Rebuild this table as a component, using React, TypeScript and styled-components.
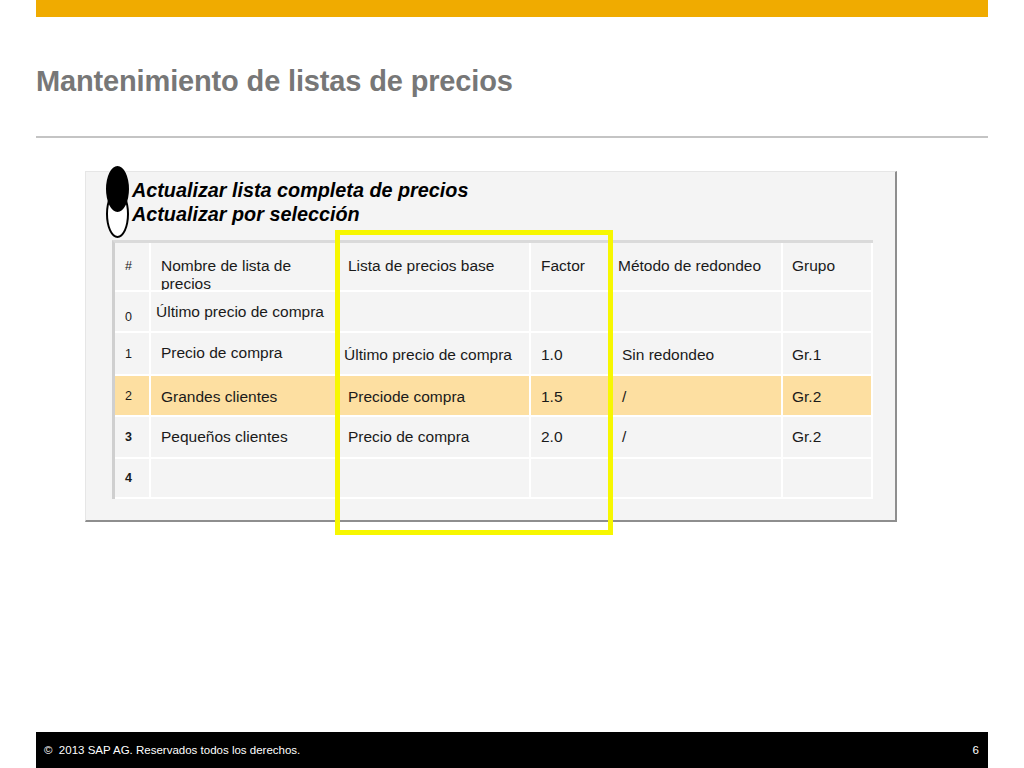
import React from "react";
import styled, { createGlobalStyle } from "styled-components";

const Global = createGlobalStyle`
  html, body { margin: 0; padding: 0; background: #fff; }
  body { font-family: "Liberation Sans", Arial, sans-serif; }
`;

const Page = styled.div`
  width: 1024px;
  height: 768px;
  box-sizing: border-box;
  padding: 0 36px;
  display: flex;
  flex-direction: column;
  overflow: hidden;
`;

const TopBar = styled.div`
  height: 17px;
  background: #f0ab00;
`;

const TitleArea = styled.div`
  height: 119px;
  box-sizing: border-box;
  padding-top: 46px;
`;

const Title = styled.h1`
  margin: 0;
  font-family: "Liberation Sans", Arial, sans-serif;
  font-weight: bold;
  font-size: 29px;
  line-height: 36px;
  color: #777777;
  letter-spacing: -0.15px;
`;

const Rule = styled.div`
  height: 2px;
  background: #c4c4c4;
`;

const Panel = styled.section`
  position: relative;
  margin: 33px 0 0 49px;
  width: 812px;
  height: 351px;
  box-sizing: border-box;
  background: #f4f4f4;
  border-top: 1px solid #e6e6e6;
  border-left: 1px solid #e6e6e6;
  border-right: 2px solid #8e8e8e;
  border-bottom: 2px solid #8e8e8e;
  padding: 6px 0 0 20px;
`;

const Options = styled.div`
  display: flex;
  flex-direction: column;
`;

const OptionRow = styled.div`
  display: flex;
  align-items: center;
  height: 24px;
`;

const OvalSlot = styled.div`
  position: relative;
  width: 26px;
  height: 24px;
  flex: none;
`;

const Oval = styled.span<{ $checked?: boolean; $h: number }>`
  position: absolute;
  left: 0;
  top: -12px;
  width: 23px;
  height: ${(p) => p.$h}px;
  box-sizing: border-box;
  border-radius: 50%;
  border: 2px solid #000;
  background: ${(p) => (p.$checked ? "#000" : "#fff")};
  z-index: ${(p) => (p.$checked ? 2 : 1)};
`;

const OptionLabel = styled.span`
  font-family: "Liberation Sans", Arial, sans-serif;
  font-weight: bold;
  font-style: italic;
  font-size: 19.8px;
  color: #000;
  white-space: nowrap;
`;

const Table = styled.div`
  margin: 14px 0 0 6px;
  display: inline-grid;
  grid-template-columns: 34px 186px 190px 78px 170px 88px;
  grid-template-rows: 47px 39px 41px 39px 40px 38px;
  gap: 2px;
  background: #ffffff;
  border-top: 3px solid #dadada;
  border-left: 3px solid #cfcfcf;
  padding: 0 2px 2px 0;
`;

const Cell = styled.div<{ $hl?: boolean; $pl: number; $top?: boolean; $dy?: number }>`
  background: ${(p) => (p.$hl ? "#fddfa1" : "#f4f4f4")};
  box-sizing: border-box;
  padding-left: ${(p) => p.$pl}px;
  padding-top: ${(p) => (p.$top ? 14 : 0)}px;
  display: flex;
  align-items: ${(p) => (p.$top ? "flex-start" : "center")};
  overflow: hidden;
  font-size: 15.5px;
  line-height: 18px;
  color: #1a1a1a;
  & > span {
    position: relative;
    top: ${(p) => p.$dy ?? 0}px;
  }
`;

const IndexText = styled.span<{ $bold?: boolean }>`
  font-size: 12.5px;
  font-weight: ${(p) => (p.$bold ? "bold" : "normal")};
`;

const Highlight = styled.div`
  position: absolute;
  left: 249px;
  top: 58px;
  width: 278px;
  height: 305px;
  box-sizing: border-box;
  border: 5px solid #f7f700;
  pointer-events: none;
`;

const Footer = styled.footer`
  margin-top: auto;
  height: 36px;
  background: #000;
  color: #fff;
  display: flex;
  align-items: center;
  justify-content: space-between;
  padding: 0 9px 0 8px;
  font-family: "Liberation Sans", Arial, sans-serif;
  font-size: 11.5px;
`;

type Row = {
  idx: string;
  bold?: boolean;
  hl?: boolean;
  idxDy?: number;
  cells: { text: string; pl: number; dy?: number }[];
};

const header = [
  { text: "Nombre de lista de precios", pl: 10 },
  { text: "Lista de precios base", pl: 9 },
  { text: "Factor", pl: 10 },
  { text: "Método de redondeo", pl: 7 },
  { text: "Grupo", pl: 9 },
];

const rows: Row[] = [
  {
    idx: "0",
    idxDy: 5,
    cells: [
      { text: "Último precio de compra", pl: 5 },
      { text: "", pl: 9 },
      { text: "", pl: 10 },
      { text: "", pl: 11 },
      { text: "", pl: 9 },
    ],
  },
  {
    idx: "1",
    cells: [
      { text: "Precio de compra", pl: 10, dy: -1 },
      { text: "Último precio de compra", pl: 5, dy: 1 },
      { text: "1.0", pl: 10, dy: 1 },
      { text: "Sin redondeo", pl: 11, dy: 1 },
      { text: "Gr.1", pl: 9, dy: 1 },
    ],
  },
  {
    idx: "2",
    hl: true,
    cells: [
      { text: "Grandes clientes", pl: 10, dy: 1 },
      { text: "Preciode compra", pl: 9, dy: 1 },
      { text: "1.5", pl: 10, dy: 1 },
      { text: "/", pl: 11, dy: 1 },
      { text: "Gr.2", pl: 9, dy: 1 },
    ],
  },
  {
    idx: "3",
    bold: true,
    cells: [
      { text: "Pequeños clientes", pl: 10 },
      { text: "Precio de compra", pl: 9 },
      { text: "2.0", pl: 10 },
      { text: "/", pl: 11 },
      { text: "Gr.2", pl: 9 },
    ],
  },
  {
    idx: "4",
    bold: true,
    cells: [
      { text: "", pl: 10 },
      { text: "", pl: 9 },
      { text: "", pl: 10 },
      { text: "", pl: 11 },
      { text: "", pl: 9 },
    ],
  },
];

export default function App() {
  return (
    <>
      <Global />
      <Page>
        <TopBar />
        <TitleArea>
          <Title>Mantenimiento de listas de precios</Title>
        </TitleArea>
        <Rule />
        <Panel>
          <Options>
            <OptionRow>
              <OvalSlot>
                <Oval $checked $h={46} />
              </OvalSlot>
              <OptionLabel>Actualizar lista completa de precios</OptionLabel>
            </OptionRow>
            <OptionRow>
              <OvalSlot>
                <Oval $h={48} />
              </OvalSlot>
              <OptionLabel>Actualizar por selección</OptionLabel>
            </OptionRow>
          </Options>
          <Table>
            <Cell $pl={10} $top>
              <IndexText>#</IndexText>
            </Cell>
            {header.map((h) => (
              <Cell key={h.text} $pl={h.pl} $top>
                <span>{h.text}</span>
              </Cell>
            ))}
            {rows.map((r) => (
              <React.Fragment key={r.idx}>
                <Cell $pl={10} $hl={r.hl} $dy={r.idxDy}>
                  <IndexText $bold={r.bold} style={{ top: r.idxDy ?? 0 }}>
                    {r.idx}
                  </IndexText>
                </Cell>
                {r.cells.map((c, i) => (
                  <Cell key={i} $pl={c.pl} $hl={r.hl} $dy={c.dy}>
                    <span>{c.text}</span>
                  </Cell>
                ))}
              </React.Fragment>
            ))}
          </Table>
          <Highlight />
        </Panel>
        <Footer>
          <span>©&nbsp; 2013 SAP AG. Reservados todos los derechos.</span>
          <span>6</span>
        </Footer>
      </Page>
    </>
  );
}
